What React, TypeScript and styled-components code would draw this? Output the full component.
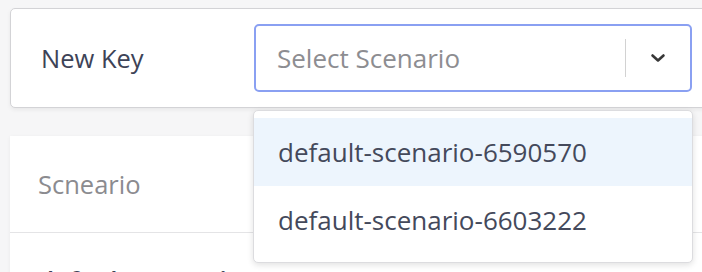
import React, { FC, useState } from "react";
import styled, { createGlobalStyle } from "styled-components";

const GlobalStyle = createGlobalStyle`
    html, body {
        margin: 0;
        padding: 0;
        background-color: #f6f6f7;
        overflow: hidden;
        font-family: "Open Sans", "Liberation Sans", sans-serif;
    }
`;

const Page = styled.div`
    display: flex;
    flex-direction: column;
    gap: 28px;
    padding: 8px 0 0 10px;
    width: 740px;
`;

const KeyCard = styled.div`
    display: flex;
    flex-direction: row;
    align-items: center;
    height: 100px;
    box-sizing: border-box;
    padding-left: 30px;
    background-color: #ffffff;
    border: 1px solid #d3d3d6;
    border-radius: 5px;
    box-shadow: 0 2px 4px rgba(0, 0, 0, 0.06);
`;

const KeyLabel = styled.div`
    width: 213px;
    font-size: 25.5px;
    color: #3d4357;
`;

const SelectWrap = styled.div`
    position: relative;
    width: 438px;
`;

const SelectBox = styled.div`
    display: flex;
    flex-direction: row;
    align-items: center;
    height: 68px;
    box-sizing: border-box;
    padding-left: 21px;
    border: 2px solid #8aa0f2;
    border-radius: 5px;
    background-color: #ffffff;
`;

const Placeholder = styled.div`
    flex: 1;
    font-size: 26px;
    color: #8d8d91;
`;

const Separator = styled.div`
    width: 1.5px;
    height: 38px;
    background-color: #d2d2d2;
`;

const ChevronBox = styled.div`
    display: flex;
    justify-content: center;
    align-items: center;
    width: 64px;
    height: 100%;
    color: #383838;
`;

const Menu = styled.div`
    position: absolute;
    top: calc(100% + 18px);
    left: -1px;
    width: 440px;
    box-sizing: border-box;
    padding: 7px 0 8px;
    background-color: #ffffff;
    border: 1px solid #dcdcdf;
    border-radius: 5px;
    box-shadow: 0 2px 6px rgba(0, 0, 0, 0.12);
    z-index: 10;
`;

const Option = styled.div<{ $active: boolean }>`
    display: flex;
    align-items: center;
    height: 68px;
    padding-left: 24px;
    font-size: 26px;
    color: #44495b;
    background-color: ${(p) => (p.$active ? "#edf5fd" : "#ffffff")};
`;

const ScenarioCard = styled.div`
    display: flex;
    flex-direction: column;
    background-color: #ffffff;
    box-shadow: 0 1px 4px rgba(0, 0, 0, 0.05);
`;

const ScenarioHeader = styled.div`
    display: flex;
    align-items: center;
    height: 96px;
    padding-left: 28px;
    font-size: 25.5px;
    color: #8b8b8f;
    border-bottom: 1px solid #e4e4e6;
`;

const ScenarioRow = styled.div`
    display: flex;
    align-items: center;
    height: 93px;
    padding-left: 28px;
    font-size: 26px;
    font-weight: 600;
    color: #3d4357;
`;

const Chevron: FC = () => (
    <svg width="16" height="10" viewBox="0 0 16 10" fill="none">
        <path d="M2.5 2.5l5.5 5 5.5-5" stroke="currentColor" strokeWidth="2.6" strokeLinecap="round" strokeLinejoin="round" />
    </svg>
);

const scenarios = ["default-scenario-6590570", "default-scenario-6603222"];

const App: FC = () => {
    const [hovered] = useState(0);

    return (
        <>
            <GlobalStyle />
            <Page>
                <KeyCard>
                    <KeyLabel>New Key</KeyLabel>
                    <SelectWrap>
                        <SelectBox>
                            <Placeholder>Select Scenario</Placeholder>
                            <Separator />
                            <ChevronBox>
                                <Chevron />
                            </ChevronBox>
                        </SelectBox>
                        <Menu>
                            {scenarios.map((item, index) => (
                                <Option key={item} $active={index === hovered}>{item}</Option>
                            ))}
                        </Menu>
                    </SelectWrap>
                </KeyCard>
                <ScenarioCard>
                    <ScenarioHeader>Scneario</ScenarioHeader>
                    <ScenarioRow>default-scenario-6590570</ScenarioRow>
                </ScenarioCard>
            </Page>
        </>
    );
};

export default App;
